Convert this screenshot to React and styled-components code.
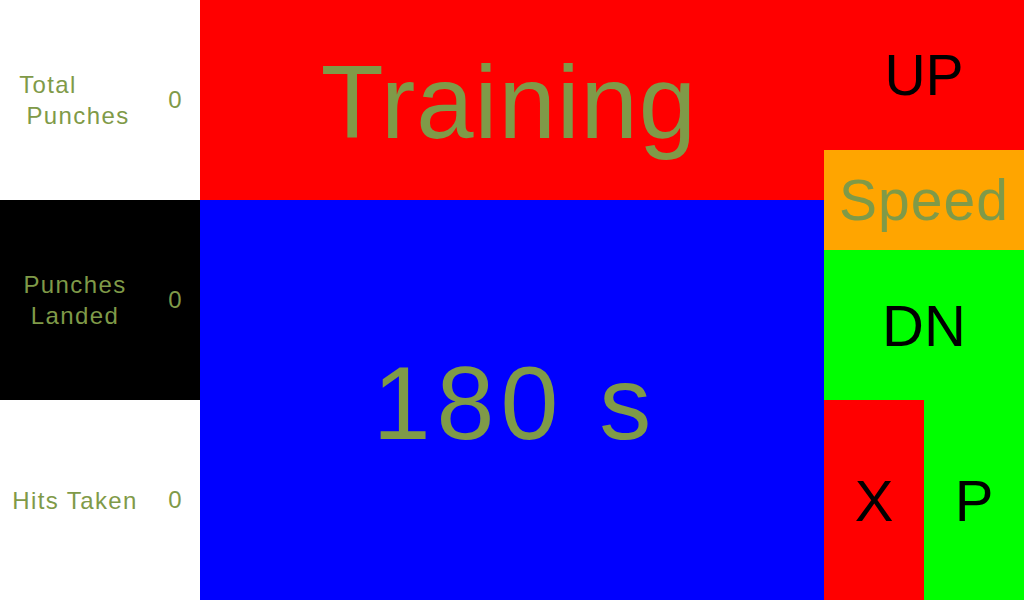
import React from 'react';
import styled, { createGlobalStyle } from 'styled-components';

const OLIVE = '#7f9a48';

const GlobalStyle = createGlobalStyle`
  html, body {
    margin: 0;
    padding: 0;
    width: 1024px;
    height: 600px;
    overflow: hidden;
    font-family: "Liberation Sans", Arial, sans-serif;
  }
`;

const stats = [
  { lines: [{ text: 'Total', shift: -27 }, { text: 'Punches', shift: 3 }], value: 0, dark: false },
  { lines: [{ text: 'Punches', shift: 0 }, { text: 'Landed', shift: 0 }], value: 0, dark: true },
  { lines: [{ text: 'Hits Taken', shift: 0 }], value: 0, dark: false },
];

const App = () => {
  return (
    <>
      <GlobalStyle />
      <Screen>
        <StatsColumn>
          {stats.map((stat, i) => (
            <StatCell key={i} $dark={stat.dark}>
              <StatLabel>
                {stat.lines.map(line => (
                  <LabelLine key={line.text} $shift={line.shift}>{line.text}</LabelLine>
                ))}
              </StatLabel>
              <StatValue>{stat.value}</StatValue>
            </StatCell>
          ))}
        </StatsColumn>

        <MainColumn>
          <Title>Training</Title>
          <Timer>180 s</Timer>
        </MainColumn>

        <Controls>
          <ControlButton $bg="#ff0000" $size={57}>UP</ControlButton>
          <SpeedLabel>Speed</SpeedLabel>
          <ControlButton $bg="#00ff00" $size={58}>DN</ControlButton>
          <ButtonRow>
            <ControlButton $bg="#ff0000" $size={58}>X</ControlButton>
            <ControlButton $bg="#00ff00" $size={58}>P</ControlButton>
          </ButtonRow>
        </Controls>
      </Screen>
    </>
  );
}

const Screen = styled.div`
  display: grid;
  grid-template-columns: 200px 624px 200px;
  width: 1024px;
  height: 600px;
`;

const StatsColumn = styled.div`
  display: grid;
  grid-template-rows: repeat(3, 200px);
`;

const StatCell = styled.div`
  display: flex;
  align-items: center;
  background: ${p => (p.$dark ? '#000000' : '#ffffff')};
  color: ${OLIVE};
  font-size: 24px;
`;

const StatLabel = styled.div`
  width: 150px;
  display: flex;
  flex-direction: column;
  align-items: center;
  line-height: 31px;
  letter-spacing: 1.4px;
`;

const LabelLine = styled.span`
  position: relative;
  left: ${p => p.$shift}px;
`;

const StatValue = styled.div`
  width: 50px;
  padding-right: 2px;
  text-align: center;
`;

const MainColumn = styled.div`
  display: grid;
  grid-template-rows: 200px 400px;
`;

const Title = styled.div`
  display: flex;
  align-items: center;
  justify-content: center;
  background: #ff0000;
  color: ${OLIVE};
  font-size: 103px;
  letter-spacing: 1px;
  padding: 6px 6px 0 0;
`;

const Timer = styled.div`
  display: flex;
  align-items: center;
  justify-content: center;
  background: #0000ff;
  color: ${OLIVE};
  font-size: 104px;
  letter-spacing: 6px;
  padding: 6px 0 0 6px;
`;

const Controls = styled.div`
  display: grid;
  grid-template-rows: 150px 100px 150px 200px;
`;

const ControlButton = styled.div`
  display: flex;
  align-items: center;
  justify-content: center;
  background: ${p => p.$bg};
  color: #000000;
  font-size: ${p => p.$size}px;
`;

const SpeedLabel = styled.div`
  display: flex;
  align-items: center;
  justify-content: center;
  background: #ffa500;
  color: ${OLIVE};
  font-size: 57px;
  letter-spacing: 1px;
`;

const ButtonRow = styled.div`
  display: grid;
  grid-template-columns: 100px 100px;
`;

export default App;
